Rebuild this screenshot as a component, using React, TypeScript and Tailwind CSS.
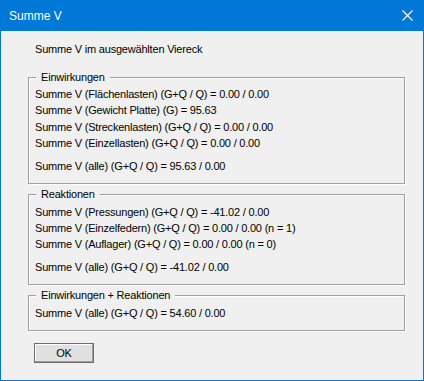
const font = "font-['Liberation_Sans',Arial,sans-serif]";

function GroupBox({
  title,
  className = "",
  children,
}: {
  title: string;
  className?: string;
  children: React.ReactNode;
}) {
  return (
    <fieldset
      className={`ml-[27px] w-[377px] border border-[#a0a0a0] shadow-[1px_1px_0_#fff,inset_1px_1px_0_#fff] px-[6px] ${className}`}
    >
      <legend className="ml-[1px] bg-[#f0f0f0] px-[5px] leading-[16px]">{title}</legend>
      {children}
    </fieldset>
  );
}

export default function App() {
  return (
    <div
      className={`flex h-[381px] w-[424px] flex-col border-x border-b border-[#0078d7] bg-[#f0f0f0] text-[11px] leading-[16px] tracking-[-0.2px] text-black ${font}`}
    >
      <div className="-mx-px flex h-[31px] shrink-0 items-center justify-between bg-[#0078d7] pl-[9px] pr-[10px] text-[12px] tracking-normal text-white">
        <span>Summe V</span>
        <svg width="11" height="11" viewBox="0 0 11 11" className="mr-[1px]">
          <path d="M0.5 0.5 L10.5 10.5 M10.5 0.5 L0.5 10.5" stroke="#fff" strokeWidth="1.1" />
        </svg>
      </div>

      <p className="ml-[34px] mt-[10px]">Summe V im ausgewählten Viereck</p>

      <GroupBox title="Einwirkungen" className="mt-[12px] pb-[9px] pt-[1px]">
        <p>Summe V (Flächenlasten) (G+Q / Q) = 0.00 / 0.00</p>
        <p>Summe V (Gewicht Platte) (G) = 95.63</p>
        <p className="mt-[1px]">Summe V (Streckenlasten) (G+Q / Q) = 0.00 / 0.00</p>
        <p>Summe V (Einzellasten) (G+Q / Q) = 0.00 / 0.00</p>
        <p className="mt-[7px]">Summe V (alle) (G+Q / Q) = 95.63 / 0.00</p>
      </GroupBox>

      <GroupBox title="Reaktionen" className="mt-[2px] pb-[9px] pt-[2px]">
        <p>Summe V (Pressungen) (G+Q / Q) = -41.02 / 0.00</p>
        <p>Summe V (Einzelfedern) (G+Q / Q) = 0.00 / 0.00 (n = 1)</p>
        <p>Summe V (Auflager) (G+Q / Q) = 0.00 / 0.00 (n = 0)</p>
        <p className="mt-[7px]">Summe V (alle) (G+Q / Q) = -41.02 / 0.00</p>
      </GroupBox>

      <GroupBox title="Einwirkungen + Reaktionen" className="mt-[2px] pb-[9px] pt-[2px]">
        <p>Summe V (alle) (G+Q / Q) = 54.60 / 0.00</p>
      </GroupBox>

      <button
        type="button"
        className="ml-[33px] mt-[12px] h-[20px] w-[60px] border border-[#6d6d6d] bg-[#e1e1e1] shadow-[inset_-1px_-1px_0_#a0a0a0,inset_1px_1px_0_#fff] text-[11px] leading-none"
      >
        OK
      </button>
    </div>
  );
}
